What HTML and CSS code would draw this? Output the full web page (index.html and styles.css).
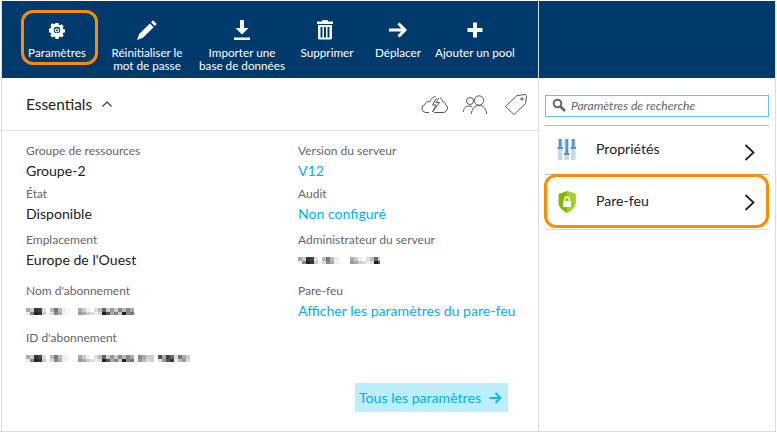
FILE: index.html
```html
<!DOCTYPE html>
<html lang="fr">
<head>
  <meta charset="UTF-8">
  <title>Serveur</title>
  <link rel="stylesheet" href="styles.css">
</head>
<body>

<div class="page">

  <div class="main">
    <div class="toolbar">
      <div class="tool tool-first marked">
        <svg width="16" height="16" viewBox="0 0 18 18"><path fill="#fff" fill-rule="evenodd" d="M7.300 1h3.400l.4 2 1.400.6 1.800-1.100 2.200 2.200-1.100 1.800.6 1.400 2 .4v3.400l-2 .4-.6 1.400 1.100 1.800-2.200 2.200-1.800-1.100-1.400.6-.4 2H7.300l-.4-2-1.400-.6-1.800 1.100-2.200-2.200 1.100-1.800-.6-1.400-2-.4V7.300l2-.4.6-1.400-1.100-1.800 2.200-2.200 1.800 1.100 1.400-.6zM9 5.300a3.700 3.700 0 1 0 0 7.400 3.700 3.700 0 0 0 0-7.400z"/><path fill="none" stroke="#fff" stroke-width="1.200" d="M7.600 7.800a2 2 0 1 0 2.800 0M9 6.500v2.800"/></svg>
        <span>Paramètres</span>
      </div>
      <div class="tool tool-reset">
        <svg width="22" height="22" viewBox="0 0 22 22"><path fill="#fff" d="M17 1.200l3.800 3.800-2 2-3.800-3.800zM13.800 4.400l3.800 3.800L7 18.800 1 21l2.200-6z"/></svg>
        <span>Réinitialiser le<br>mot de passe</span>
      </div>
      <div class="tool tool-import">
        <svg width="18" height="22" viewBox="0 0 18 22"><path fill="#fff" d="M7 1h4v8h4.500L9 15.500 2.500 9H7zM1 18.500h16V21H1z"/></svg>
        <span>Importer une<br>base de données</span>
      </div>
      <div class="tool tool-delete">
        <svg class="trash" width="16" height="20" viewBox="0 0 16 20"><path fill="#fff" fill-rule="evenodd" d="M5.500 0h5l.5 1.500h5V4H0V1.500h5zM1 5h14v13.500l-1 1H2l-1-1zM3.500 7v10.500h2V7zM7 7v10.500h2V7zM10.500 7v10.500h2V7z"/></svg>
        <span>Supprimer</span>
      </div>
      <div class="tool tool-move">
        <svg width="18" height="16" viewBox="0 0 18 16"><path fill="none" stroke="#fff" stroke-width="3" d="M0 8h15M9.500 1.500L16 8l-6.500 6.500"/></svg>
        <span>Déplacer</span>
      </div>
      <div class="tool tool-add">
        <svg width="16" height="16" viewBox="0 0 16 16"><path fill="#fff" d="M6 .5h4V6h5.500v4H10v5.500H6V10H.5V6H6z"/></svg>
        <span>Ajouter un pool</span>
      </div>
    </div>

    <div class="essentials-head">
      <div class="essentials-title">
        <span>Essentials</span>
        <svg width="10" height="6" viewBox="0 0 10 6"><path fill="none" stroke="#333" stroke-width="1.100" d="M.5 5.500L5 1l4.500 4.500"/></svg>
      </div>
      <div class="head-icons">
        <svg width="27" height="19" viewBox="0 0 27 19"><g fill="none" stroke="#555"><path d="M8 17.500H5a4 4 0 0 1-1-7.900c.5-2.600 2.800-3.600 4.800-2.900C10 3.500 12 2 14.500 1.500M19 2.500c1.500 1 2.300 2.500 2.500 4.300 1.800 0 3 1.200 3 2.700 1.200.7 2 1.900 2 3.300 0 2.500-2 4.700-4.500 4.700H13"/><path d="M15.500 3l-4 7h3.500l-3.500 7 7-9.500h-3.500L18 3"/></g></svg>
        <svg width="26" height="19" viewBox="0 0 26 19"><g fill="none" stroke="#555"><circle cx="7" cy="6" r="3.500"/><path d="M.5 17c0-3.800 2.200-6 5.500-6 1.200 0 2.300.3 3.200.9"/><circle cx="16" cy="5.500" r="4.700"/><path d="M8.500 19c0-5 3-8.500 7.500-8.500s7.500 3.500 7.500 8.500"/></g></svg>
        <svg width="23" height="21" viewBox="0 0 23 21"><g fill="none" stroke="#555"><path d="M13 1.500l8-1c.8 0 1.500.7 1.500 1.500l-1 7.500L10 20.500 1.500 12.500z"/><circle cx="18" cy="5" r="1.200"/></g></svg>
      </div>
    </div>

    <div class="details">
      <div class="col">
        <div class="field field-a">
          <div class="label">Groupe de ressources</div>
          <div class="value">Groupe-2</div>
        </div>
        <div class="field field-b">
          <div class="label">État</div>
          <div class="value">Disponible</div>
        </div>
        <div class="field field-c">
          <div class="label">Emplacement</div>
          <div class="value">Europe de l'Ouest</div>
        </div>
        <div class="field field-d">
          <div class="label">Nom d'abonnement</div>
          <div class="blur blur-sub"></div>
        </div>
        <div class="field field-e">
          <div class="label">ID d'abonnement</div>
          <div class="blur blur-id"></div>
        </div>
      </div>
      <div class="col">
        <div class="field field-a">
          <div class="label">Version du serveur</div>
          <div class="value link">V12</div>
        </div>
        <div class="field field-b">
          <div class="label">Audit</div>
          <div class="value link">Non configuré</div>
        </div>
        <div class="field field-c">
          <div class="label">Administrateur du serveur</div>
          <div class="blur blur-admin"></div>
        </div>
        <div class="field field-d">
          <div class="label">Pare-feu</div>
          <div class="value link">Afficher les paramètres du pare-feu</div>
        </div>
      </div>
    </div>

    <div class="all-row">
      <div class="all-btn">
        <span>Tous les paramètres</span>
        <svg width="13" height="12" viewBox="0 0 13 12"><path fill="none" stroke="#00bcf2" stroke-width="1.800" d="M.5 6h11M6.500 1l5 5-5 5"/></svg>
      </div>
    </div>
  </div>

  <div class="side">
    <div class="side-top"></div>
    <div class="side-body">
      <div class="search">
        <svg width="14" height="14" viewBox="0 0 14 14"><circle cx="5.500" cy="5.500" r="3.800" fill="none" stroke="#666" stroke-width="2"/><path stroke="#666" stroke-width="2.600" d="M8.500 8.500L13 13"/></svg>
        <span>Paramètres de recherche</span>
      </div>
      <div class="row row-props">
        <svg class="row-icon" width="28" height="22" viewBox="0 0 28 22">
          <path fill="#bcdcec" d="M5 0h4.500v21H5zM11.500 0H16v21h-4.500zM18 0h4.500v21H18z"/>
          <path fill="#3e9fd6" d="M6 0h2.500v9H6zM12.500 0H15v14h-2.500zM19 0h2.500v9H19z"/>
          <path fill="#7d8a92" d="M4.500 8h5.500v2H4.500zM11 14h5.500v2H11zM17.500 8H23v2h-5.500z"/>
        </svg>
        <span>Propriétés</span>
        <svg class="chevron" width="11" height="17" viewBox="0 0 11 17"><path fill="none" stroke="#222" stroke-width="1.800" d="M1.500 1l8 7.500-8 7.500"/></svg>
      </div>
      <div class="row row-fire marked">
        <svg class="row-icon" width="28" height="22" viewBox="0 0 28 22">
          <path fill="#7fba00" d="M14 0l8.500 3v9c0 4.500-4 7.500-8.500 10-4.500-2.500-8.500-5.500-8.500-10V3z"/>
          <path fill="#a6cf2a" d="M14 0l8.500 3v9c0 4.500-4 7.500-8.500 10z"/>
          <path fill="none" stroke="#fff" stroke-width="1.400" d="M11.700 10V8.300a2.300 2.300 0 0 1 4.600 0V10"/>
          <path fill="#fff" d="M10 10h8v6h-8z"/>
        </svg>
        <span>Pare-feu</span>
        <svg class="chevron" width="11" height="17" viewBox="0 0 11 17"><path fill="none" stroke="#222" stroke-width="1.800" d="M1.500 1l8 7.500-8 7.500"/></svg>
      </div>
    </div>
  </div>

</div>

</body>
</html>
```

FILE: styles.css
```css
html, body {
  margin: 0;
  padding: 0;
}
body {
  font-family: Lato, "Open Sans", sans-serif;
  background: white;
  color: #222;
}
.page {
  display: flex;
  width: 776px;
  height: 432px;
  box-sizing: border-box;
  padding: 1px 0 0 1px;
  border-bottom: 1px solid #ddd;
  border-right: 1px solid #ddd;
}
.main {
  width: 538px;
  flex: none;
  border-right: 1px solid #ddd;
  border-left: 1px solid #ddd;
  box-sizing: border-box;
}

/* toolbar */
.toolbar {
  height: 77px;
  background: #003a6c;
  display: flex;
  color: white;
  font-size: 11.7px;
  line-height: 13px;
}
.tool {
  display: flex;
  flex-direction: column;
  align-items: center;
  flex: none;
  text-align: center;
  white-space: nowrap;
}
.tool svg {
  height: 26px;
  margin-top: 16px;
  margin-bottom: 3px;
}
.tool .trash {
  margin-right: 4px;
}
.marked {
  position: relative;
}
.marked::after {
  content: "";
  position: absolute;
  border: 3px solid #ff8c00;
  border-radius: 12px;
}
.tool-first { width: 72px; margin-left: 19px; }
.tool-first::after { inset: 9px -5px 13px 0; }
.tool-reset { width: 90px; margin-left: 9px; }
.tool-import { width: 92px; margin-left: 4px; }
.tool-delete { width: 64px; margin-left: 7px; }
.tool-move { width: 52px; margin-left: 13px; }
.tool-add { width: 84px; margin-left: 9px; }

/* essentials */
.essentials-head {
  height: 52px;
  display: flex;
  align-items: center;
  justify-content: space-between;
  padding: 0 11px 0 24px;
  border-bottom: 1px solid #e0e0e0;
}
.essentials-title {
  display: flex;
  align-items: center;
  gap: 10px;
  font-size: 15.4px;
}
.head-icons {
  display: flex;
  align-items: center;
  gap: 15px;
}
.details {
  display: flex;
  padding: 12px 0 0 24px;
}
.col {
  width: 272px;
  flex: none;
}
.label {
  font-size: 12px;
  line-height: 16px;
  color: #666;
}
.value {
  font-size: 14.1px;
  line-height: 20px;
  margin-top: 2px;
}
.link {
  color: #00b0f0;
}
.field-a { height: 43px; }
.field-b { height: 46px; }
.field-c { height: 51px; }
.field-d { height: 47px; }
.field-e { height: 42px; }

/* the same blurred name starts all three hidden values */
.blur {
  height: 7px;
  margin-top: 9px;
  filter: blur(.4px);
  background-repeat: no-repeat;
  background-size: 164px 4px, 164px 3px;
  background-position: 0 0, 0 4px;
  background-image:
    linear-gradient(to right, #aaa 0 4px, #ccc 4px 8px, #333 8px 12px, #444 12px 16px, #ddd 16px 20px, #fff 20px 24px, #bbb 24px 28px, #777 28px 32px, #bbb 32px 36px, #eee 36px 40px, #f8f8f8 40px 44px, #fff 44px 52px, #aaa 52px 56px, #ccc 56px 60px, #eee 60px 64px, #fff 64px 68px, #ddd 68px 72px, #bbb 72px 76px, #666 76px 80px, #ccc 80px 84px, #999 84px 88px, #ccc 88px 92px, #888 92px 96px, #bbb 96px 100px, #888 100px 104px, #aaa 104px 108px, #fff 108px 112px, #888 112px 116px, #aaa 116px 120px, #ccc 120px 128px, #fff 128px 132px, #555 132px 136px, #aaa 136px 140px, #444 140px 144px, #666 144px 148px, #ddd 148px 152px, #777 152px 156px, #aaa 156px 160px, #ccc 160px 164px),
    linear-gradient(to right, #eee 0 4px, #888 4px 8px, #222 8px 12px, #333 12px 16px, #ccc 16px 20px, #f4f4f4 20px 24px, #ddd 24px 28px, #888 28px 32px, #aaa 32px 36px, #eee 36px 40px, #f8f8f8 40px 44px, #fff 44px 52px, #999 52px 56px, #aaa 56px 60px, #ccc 60px 64px, #ddd 64px 68px, #eee 68px 72px, #ddd 72px 76px, #222 76px 80px, #555 80px 84px, #aaa 84px 88px, #888 88px 92px, #ccc 92px 96px, #222 96px 100px, #888 100px 104px, #777 104px 108px, #eee 108px 112px, #999 112px 116px, #bbb 116px 120px, #ddd 120px 124px, #ccc 124px 128px, #fff 128px 132px, #ddd 132px 136px, #999 136px 140px, #555 140px 144px, #333 144px 148px, #eee 148px 152px, #bbb 152px 156px, #999 156px 160px, #ddd 160px 164px);
}
.blur-sub { width: 110px; }
.blur-id { width: 164px; }
.blur-admin { width: 82px; }

.all-row {
  display: flex;
  justify-content: flex-end;
  padding-right: 30px;
  margin-top: 11px;
}
.all-btn {
  width: 153px;
  height: 29px;
  box-sizing: border-box;
  background: #bdeefb;
  color: #00b0f0;
  font-size: 14.1px;
  white-space: nowrap;
  display: flex;
  align-items: center;
  justify-content: space-between;
  padding: 0 6px 0 4px;
}

/* side blade */
.side {
  flex: 1;
}
.side-top {
  height: 77px;
  background: #003a6c;
}
.side-body {
  padding: 17px 6px 0 6px;
}
.search {
  height: 22px;
  box-sizing: border-box;
  border: 1px solid #59c7ec;
  display: flex;
  align-items: center;
  gap: 5px;
  padding: 0 0 2px 6px;
  font-size: 12.2px;
  font-style: italic;
  color: #666;
}
.row {
  display: flex;
  align-items: center;
  font-size: 14.1px;
  border-top: 1px solid #bbb;
  color: #222;
}
.row-props { height: 48px; margin-top: 8px; }
.row-fire { height: 54px; border-bottom: 1px solid #ddd; }
.row-icon { margin: 0 15px 0 8px; flex: none; }
.row span { flex: 1; margin-top: -4px; }
.chevron { margin-right: 14px; flex: none; }
.row-props .chevron { margin-top: 5px; }
.row-fire::after { inset: -1px 0 1px -1px; }
```
